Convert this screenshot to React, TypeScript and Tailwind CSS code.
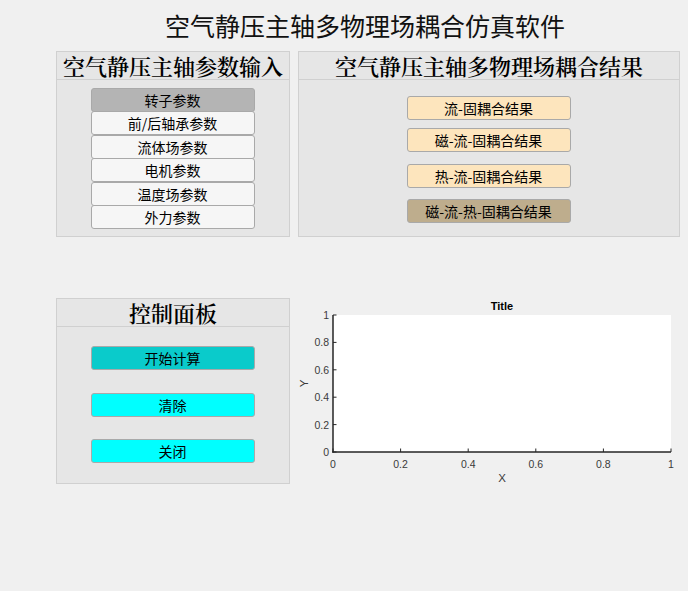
import React from "react";

const sans = { fontFamily: '"Noto Sans CJK SC", "Noto Sans", sans-serif' };
const serif = { fontFamily: '"Noto Serif CJK SC", "Noto Sans CJK SC", serif' };

function Btn({ label, cls, extra = "" }: { label: string; cls: string; extra?: string }) {
  return (
    <div
      className={`w-[164px] h-[24px] flex items-center justify-center rounded-[3px] border border-[#a9a9a9] text-[14px] leading-none text-black ${cls} ${extra}`}
      style={sans}
    >
      {label}
    </div>
  );
}

function Header({ text }: { text: string }) {
  return (
    <div
      className="h-[28px] border-b border-[#d0d0d0] flex items-center justify-center text-[22px] font-semibold leading-none text-black"
      style={serif}
    >
      {text}
    </div>
  );
}

function Plot() {
  const L = 35, T = 19, R = 373, B = 156;
  const W = R - L, H = B - T;
  const vals = [0, 0.2, 0.4, 0.6, 0.8, 1];
  const lab = (v: number) => (v === 0 ? "0" : v === 1 ? "1" : v.toString());
  const font = '"Liberation Sans", Arial, sans-serif';
  return (
    <svg width={390} height={194} className="block">
      <rect x={L} y={T} width={W} height={H} fill="#ffffff" />
      <text x={(L + R) / 2} y={14} textAnchor="middle" fontFamily={font} fontSize={11} fontWeight="bold" fill="#000">
        Title
      </text>
      {vals.map((v) => {
        const y = B - v * H;
        return (
          <g key={"y" + v}>
            <line x1={L} x2={L + 3.5} y1={y} y2={y} stroke="#262626" strokeWidth={1} />
            <text x={L - 4} y={y + 4} textAnchor="end" fontFamily={font} fontSize={10.5} fill="#3a3a3a">
              {lab(v)}
            </text>
          </g>
        );
      })}
      {vals.map((v) => {
        const x = L + v * W;
        return (
          <g key={"x" + v}>
            <line x1={x} x2={x} y1={B} y2={B - 3.5} stroke="#262626" strokeWidth={1} />
            <text x={x} y={172} textAnchor="middle" fontFamily={font} fontSize={10.5} fill="#3a3a3a">
              {lab(v)}
            </text>
          </g>
        );
      })}
      <line x1={L} x2={L} y1={T} y2={B + 0.75} stroke="#262626" strokeWidth={1.5} />
      <line x1={L - 0.75} x2={R} y1={B} y2={B} stroke="#262626" strokeWidth={1.5} />
      <text x={(L + R) / 2} y={186} textAnchor="middle" fontFamily={font} fontSize={11.5} fill="#3a3a3a">
        X
      </text>
      <text
        x={10}
        y={(T + B) / 2}
        textAnchor="middle"
        fontFamily={font}
        fontSize={11.5}
        fill="#3a3a3a"
        transform={`rotate(-90 10 ${(T + B) / 2})`}
      >
        Y
      </text>
    </svg>
  );
}

export default function App() {
  return (
    <div className="w-[688px] h-[591px] bg-[#f0f0f0] overflow-hidden">
      <div className="h-[51px] flex items-center pl-[165px] pb-[1px]">
        <div className="text-[25px] leading-none text-[#111]" style={sans}>
          空气静压主轴多物理场耦合仿真软件
        </div>
      </div>

      <div className="flex pl-[56px] gap-[8px]">
        <div className="w-[234px] h-[186px] bg-[#e6e6e6] border border-[#d0d0d0]">
          <Header text="空气静压主轴参数输入" />
          <div className="flex flex-col items-center pt-[8px] pr-[1px]">
            <Btn label="转子参数" cls="bg-[#b4b4b4]" />
            <Btn label="前/后轴承参数" cls="bg-[#f6f6f6]" extra="-mt-[0.6px]" />
            <Btn label="流体场参数" cls="bg-[#f6f6f6]" extra="-mt-[0.6px]" />
            <Btn label="电机参数" cls="bg-[#f6f6f6]" extra="-mt-[0.6px]" />
            <Btn label="温度场参数" cls="bg-[#f6f6f6]" extra="-mt-[0.6px]" />
            <Btn label="外力参数" cls="bg-[#f6f6f6]" extra="-mt-[0.6px]" />
          </div>
        </div>

        <div className="w-[382px] h-[186px] bg-[#e6e6e6] border border-[#d0d0d0]">
          <Header text="空气静压主轴多物理场耦合结果" />
          <div className="flex flex-col items-center pt-[16px] pr-[1px]">
            <Btn label="流-固耦合结果" cls="bg-[#fde5bd]" />
            <Btn label="磁-流-固耦合结果" cls="bg-[#fde5bd]" extra="mt-[8px]" />
            <Btn label="热-流-固耦合结果" cls="bg-[#fde5bd]" extra="mt-[12px]" />
            <Btn label="磁-流-热-固耦合结果" cls="bg-[#bead8d]" extra="mt-[11px]" />
          </div>
        </div>
      </div>

      <div className="flex pl-[56px] mt-[61px] gap-[8px]">
        <div className="w-[234px] h-[186px] bg-[#e6e6e6] border border-[#d0d0d0]">
          <Header text="控制面板" />
          <div className="flex flex-col items-center pt-[19px] pr-[1px]">
            <Btn label="开始计算" cls="bg-[#0acbcb]" />
            <Btn label="清除" cls="bg-[#00ffff]" extra="mt-[23px]" />
            <Btn label="关闭" cls="bg-[#00ffff]" extra="mt-[22px]" />
          </div>
        </div>
        <div className="-mt-[2px]">
          <Plot />
        </div>
      </div>
    </div>
  );
}
